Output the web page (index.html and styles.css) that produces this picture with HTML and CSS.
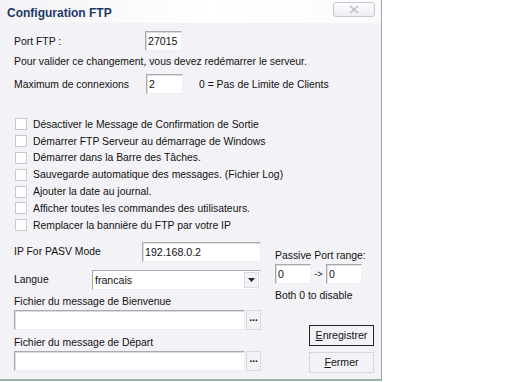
FILE: index.html
```html
<!DOCTYPE html>
<html lang="fr">
<head>
  <meta charset="UTF-8" />
  <title>Configuration FTP</title>
  <link rel="stylesheet" href="styles.css">
</head>
<body>
  <div class="window">
    <div class="titlebar">
      <span class="title">Configuration FTP</span>
      <span class="close">
        <svg width="14" height="9" viewBox="0 0 14 9"><path d="M3 1 L11 8 M11 1 L3 8" stroke="#b8bcc4" stroke-width="1.4" fill="none"/></svg>
      </span>
    </div>

    <div class="content">
      <div class="row port-row">
        <label class="lbl-port">Port FTP :</label>
        <input class="field w-short" type="text" value="27015">
      </div>
      <div class="note">Pour valider ce changement, vous devez redémarrer le serveur.</div>
      <div class="row max-row">
        <label class="lbl-max">Maximum de connexions</label>
        <input class="field w-short" type="text" value="2">
        <span class="hint">0 = Pas de Limite de Clients</span>
      </div>

      <!-- options -->
      <ul class="options">
        <li><span class="box"></span>Désactiver le Message de Confirmation de Sortie</li>
        <li><span class="box"></span>Démarrer FTP Serveur au démarrage de Windows</li>
        <li><span class="box"></span>Démarrer dans la Barre des Tâches.</li>
        <li><span class="box"></span>Sauvegarde automatique des messages. (Fichier Log)</li>
        <li><span class="box"></span>Ajouter la date au journal.</li>
        <li><span class="box"></span>Afficher toutes les commandes des utilisateurs.</li>
        <li><span class="box"></span>Remplacer la bannière du FTP par votre IP</li>
      </ul>

      <div class="bottom">
        <div class="left-col">
          <div class="row">
            <label class="lbl-ip">IP For PASV Mode</label>
            <input class="field w-ip" type="text" value="192.168.0.2">
          </div>
          <div class="row lang-row">
            <label class="lbl-lang">Langue</label>
            <div class="combo">
              <span class="combo-text">francais</span>
              <span class="combo-btn">
                <svg width="7" height="4" viewBox="0 0 7 4"><path d="M0 0 H7 L3.5 4 Z" fill="#222"/></svg>
              </span>
            </div>
          </div>
          <div class="file-lbl first">Fichier du message de Bienvenue</div>
          <div class="row">
            <input class="field w-file" type="text" value="">
            <span class="dots">...</span>
          </div>
          <div class="file-lbl">Fichier du message de Départ</div>
          <div class="row">
            <input class="field w-file" type="text" value="">
            <span class="dots">...</span>
          </div>
        </div>

        <div class="right-col">
          <div class="range-lbl">Passive Port range:</div>
          <div class="row">
            <input class="field w-range" type="text" value="0">
            <span class="arrow">-&gt;</span>
            <input class="field w-range" type="text" value="0">
          </div>
          <div class="range-hint">Both 0 to disable</div>
          <button class="btn btn-default" type="button"><u>E</u>nregistrer</button>
          <button class="btn" type="button"><u>F</u>ermer</button>
        </div>
      </div>
    </div>
  </div>
</body>
</html>
```

FILE: styles.css
```css
body {
  margin: 0;
  background-color: #fff;
  font-family: "Liberation Sans", Arial, sans-serif;
  font-size: 10.4px;
  color: #111;
}
.window {
  width: 381px;
  height: 379px;
  background-color: #f3f3f7;
  border-right: 1px solid #a4a6ab;
  border-bottom: 2px solid #9fb2a8;
}
.titlebar {
  height: 23px;
  display: flex;
  align-items: center;
  justify-content: space-between;
  padding: 0 6px 0 7px;
  background: linear-gradient(to right, #f3f3f7 0%, #ffffff 55%, #fbfbfd 100%);
}
.title {
  font-weight: bold;
  font-size: 12px;
  color: #1d3868;
  margin-top: 2px;
}
.close {
  width: 40px;
  height: 13px;
  margin-top: -5px;
  border: 1px solid #c4c7cd;
  border-radius: 3px;
  background: linear-gradient(#fdfdfe, #eceef2);
  display: flex;
  align-items: center;
  justify-content: center;
}
.content {
  padding: 0 8px 0 14px;
}
.row {
  display: flex;
  align-items: center;
}
.port-row {
  margin-top: 8px;
}
.lbl-port { width: 131px; }
.lbl-max { width: 132px; }
.lbl-ip { width: 128px; }
.lbl-lang { width: 78px; }
.field {
  box-sizing: border-box;
  height: 20px;
  margin: 0;
  padding: 0 2px;
  font-family: inherit;
  font-size: 10.6px;
  color: #111;
  background-color: #fff;
  border: 1px solid #eeeef0;
  border-top-color: #a9aaae;
  border-left-color: #a9aaae;
  box-shadow: inset 1px 1px 0 #dcdce0;
  outline: none;
}
.w-short { width: 37px; }
.w-ip { width: 119px; }
.w-file { width: 233px; }
.w-range { width: 36px; }
.note {
  margin-top: 4px;
  height: 13px;
  line-height: 13px;
}
.max-row {
  margin-top: 6px;
}
.hint {
  margin-left: 16px;
}
.options {
  list-style: none;
  margin: 22px 0 0 1px;
  padding: 0;
}
.options li {
  display: flex;
  align-items: center;
  height: 16.8px;
}
.box {
  box-sizing: border-box;
  width: 12px;
  height: 12px;
  margin-right: 6px;
  background-color: #fff;
  border: 1px solid #c9cace;
}
.bottom {
  display: flex;
  margin-top: 8px;
}
.left-col {
  width: 247px;
}
.lang-row {
  margin-top: 8px;
}
.combo {
  box-sizing: border-box;
  width: 169px;
  height: 20px;
  display: flex;
  align-items: center;
  justify-content: space-between;
  background-color: #fff;
  border: 1px solid #eeeef0;
  border-top-color: #a9aaae;
  border-left-color: #a9aaae;
}
.combo-text {
  padding-left: 2px;
  font-size: 10.6px;
}
.combo-btn {
  width: 15px;
  height: 16px;
  margin-right: 1px;
  display: flex;
  align-items: center;
  justify-content: center;
  background-color: #f3f3f7;
  border: 1px solid #dadbe0;
  box-sizing: border-box;
}
.file-lbl {
  margin-top: 6px;
  height: 14px;
  line-height: 14px;
}
.file-lbl.first {
  margin-top: 5px;
}
.file-lbl + .row {
  margin-top: 1px;
}
.dots {
  box-sizing: border-box;
  width: 15px;
  height: 20px;
  margin-left: 1px;
  border: 1px solid #dadbe0;
  text-align: center;
  font-weight: bold;
  font-size: 10px;
  line-height: 14px;
  letter-spacing: 0;
}
.right-col {
  margin-left: 14px;
  display: flex;
  flex-direction: column;
  width: 100px;
}
.range-lbl {
  margin-top: 7px;
  height: 14px;
  line-height: 14px;
  white-space: nowrap;
}
.right-col .row {
  margin-top: 1px;
}
.arrow {
  width: 15px;
  text-align: center;
  font-size: 9px;
}
.range-hint {
  margin-top: 5px;
  height: 14px;
  line-height: 14px;
}
.btn {
  box-sizing: border-box;
  width: 65px;
  height: 21px;
  margin-left: 34px;
  padding: 0;
  font-family: inherit;
  font-size: 10.6px;
  color: #111;
  background-color: #f3f3f7;
  border: 1px solid #d6d7dc;
  margin-top: 6px;
}
.btn-default {
  margin-top: 22px;
  border: 1px solid #222;
}
```
